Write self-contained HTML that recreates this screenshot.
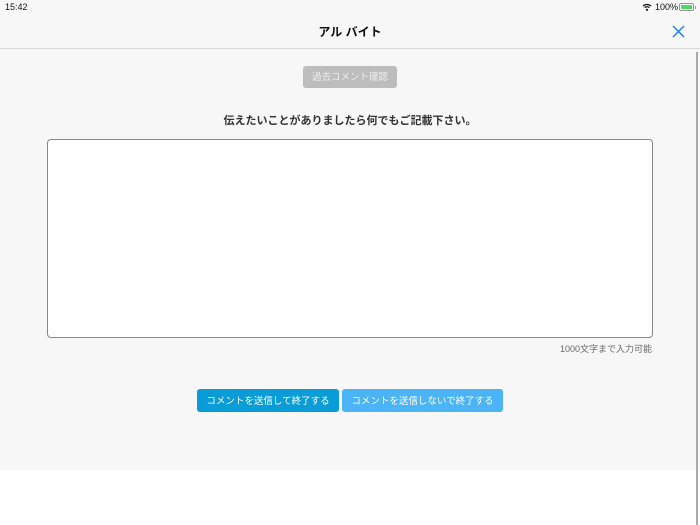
<!DOCTYPE html>
<html><head><meta charset="utf-8"><style>
*{margin:0;padding:0;box-sizing:border-box}
body{width:700px;height:525px;background:#fff;font-family:"Liberation Sans","Noto Sans CJK JP",sans-serif;position:relative;overflow:hidden;color:#333}
.gray{position:absolute;left:0;top:0;width:700px;height:470px;background:#f7f7f7}
.sb{position:absolute;top:2px;font-size:9px;color:#111}
.hdr{position:absolute;top:48px;left:0;width:700px;height:1px;background:#d8d8d8}
.title{position:absolute;top:23px;width:700px;text-align:center;font-size:12px;font-weight:bold;color:#111}
.scroll{position:absolute;left:696px;top:52px;width:1.5px;height:473px;background:#aaa}
.btn{position:absolute;border-radius:3px;color:#fff;font-size:9.5px;text-align:center}
.ta{position:absolute;left:47px;top:139px;width:606px;height:199px;background:#fff;border:1.5px solid #888;border-radius:4px}
</style></head><body>
<div class="gray"></div>
<div class="sb" style="left:5px">15:42</div>
<svg style="position:absolute;left:642px;top:3px" width="10" height="8" viewBox="0 0 10 8"><path d="M1 3 A6 6 0 0 1 9 3" stroke="#111" stroke-width="1.3" fill="none"/><path d="M2.6 4.6 A3.8 3.8 0 0 1 7.4 4.6" stroke="#111" stroke-width="1.3" fill="none"/><circle cx="5" cy="6.8" r="1.1" fill="#111"/></svg>
<div class="sb" style="left:655px">100%</div>
<div style="position:absolute;left:679px;top:3px;width:15px;height:8px;border:1px solid #999;border-radius:2px;padding:1px"><div style="width:100%;height:100%;background:#4cd964;border-radius:1px"></div></div>
<div style="position:absolute;left:694.5px;top:5.5px;width:1.5px;height:3px;background:#999"></div>
<div class="title">アル バイト</div>
<svg style="position:absolute;left:672px;top:25px" width="13" height="13" viewBox="0 0 13 13"><path d="M1 1L12 12M12 1L1 12" stroke="#1a82fb" stroke-width="1.5"/></svg>
<div class="hdr"></div>
<div class="scroll"></div>
<div class="btn" style="left:303px;top:66px;width:94px;height:22px;line-height:24px;background:#bdbdbd;color:#eee">過去コメント確認</div>
<div style="position:absolute;top:112px;width:700px;text-align:center;font-size:11px;font-weight:bold;color:#333">伝えたいことがありましたら何でもご記載下さい。</div>
<div class="ta"></div>
<div style="position:absolute;right:48px;top:342px;font-size:9px;color:#666">1000文字まで入力可能</div>
<div class="btn" style="left:197px;top:389px;width:142px;height:23px;line-height:25px;background:#0a9cd6">コメントを送信して終了する</div>
<div class="btn" style="left:342px;top:389px;width:161px;height:23px;line-height:25px;background:#4ab4f6">コメントを送信しないで終了する</div>
</body></html>
